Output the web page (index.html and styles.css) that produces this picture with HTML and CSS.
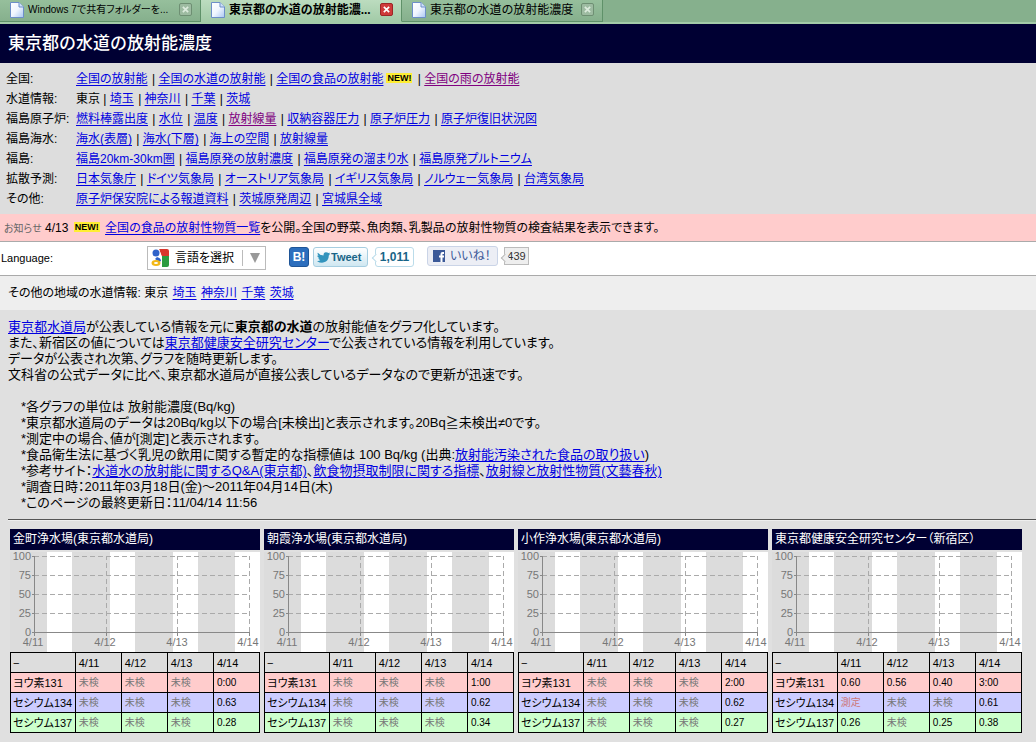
FILE: index.html
```html
<!DOCTYPE html>
<html lang="ja">
<head>
<meta charset="utf-8">
<title>東京都の水道の放射能濃度</title>
<link rel="stylesheet" href="styles.css">
</head>
<body>
<svg class="defs" aria-hidden="true">
  <defs>
    <linearGradient id="paper" x1="0" y1="0" x2="1" y2="1"><stop offset="0" stop-color="#fff"/><stop offset=".5" stop-color="#f0f6ff"/><stop offset="1" stop-color="#a9c6f2"/></linearGradient>
    <symbol id="page" viewBox="0 0 14 16"><path d="M.5.5h8.5l4.500 4.500v10.500H.5z" fill="url(#paper)" stroke="#6d8fc9"/><path d="M9 .5V5h4.500" fill="#cfe0fa" stroke="#6d8fc9"/></symbol>
    <symbol id="cross" viewBox="0 0 8 8"><path d="M1 1l6 6M7 1l-6 6" stroke="currentColor" stroke-width="2"/></symbol>
    <symbol id="grid" viewBox="0 0 250 100">
      <path d="M0 0h37v100H0zM62 0h38v100H62zM125 0h38v100h-38zM188 0h37v100h-37z" fill="#dcdcdc"/>
      <path d="M37 0h25v100H37zM100 0h25v100h-25zM163 0h25v100h-25zM225 0h25v100h-25z" fill="#fff"/>
      <path d="M24 4.500H240M24 23.500H240M24 42.500H240M24 61.500H240" stroke="#aaa" stroke-dasharray="5 3" fill="none"/>
      <path d="M96.500 80V4M167.500 80V4M239.500 80V4" stroke="#aaa" stroke-dasharray="5 3" fill="none"/>
      <path d="M24.500 4V84M22 4.500h2M22 23.500h2M22 42.500h2M22 61.500h2M22 80.500H240M96.500 80v4M167.500 80v4M239.500 80v4" stroke="#888" fill="none"/>
    </symbol>
  </defs>
</svg>

<div class="tabs">
  <div class="tab"><svg class="tab-icon"><use href="#page"/></svg><button class="tab-name tab-long">Windows 7で共有フォルダーを...</button><button class="close" aria-label="閉じる"><svg><use href="#cross"/></svg></button></div>
  <div class="tab tab-active"><svg class="tab-icon"><use href="#page"/></svg><button class="tab-name">東京都の水道の放射能濃...</button><button class="close" aria-label="閉じる"><svg><use href="#cross"/></svg></button></div>
  <div class="tab"><svg class="tab-icon"><use href="#page"/></svg><button class="tab-name">東京都の水道の放射能濃度</button><button class="close" aria-label="閉じる"><svg><use href="#cross"/></svg></button></div>
</div>

<h1 class="title">東京都の水道の放射能濃度</h1>

<nav class="nav">
  <span>全国:</span><div><a href="#">全国の放射能</a> | <a href="#">全国の水道の放射能</a> | <a href="#">全国の食品の放射能</a><b class="new">NEW!</b> | <a href="#" class="seen">全国の雨の放射能</a></div>
  <span>水道情報:</span><div>東京 | <a href="#">埼玉</a> | <a href="#">神奈川</a> | <a href="#">千葉</a> | <a href="#">茨城</a></div>
  <span>福島原子炉:</span><div><a href="#">燃料棒露出度</a> | <a href="#">水位</a> | <a href="#">温度</a> | <a href="#" class="seen">放射線量</a> | <a href="#">収納容器圧力</a> | <a href="#">原子炉圧力</a> | <a href="#">原子炉復旧状況図</a></div>
  <span>福島海水:</span><div><a href="#">海水(表層)</a> | <a href="#">海水(下層)</a> | <a href="#">海上の空間</a> | <a href="#">放射線量</a></div>
  <span>福島:</span><div><a href="#">福島20km-30km圏</a> | <a href="#">福島原発の放射濃度</a> | <a href="#">福島原発の溜まり水</a> | <a href="#">福島原発プルトニウム</a></div>
  <span>拡散予測:</span><div><a href="#">日本気象庁</a> | <a href="#">ドイツ気象局</a> | <a href="#">オーストリア気象局</a> | <a href="#">イギリス気象局</a> | <a href="#">ノルウェー気象局</a> | <a href="#">台湾気象局</a></div>
  <span>その他:</span><div><a href="#">原子炉保安院による報道資料</a> | <a href="#">茨城原発周辺</a> | <a href="#">宮城県全域</a></div>
</nav>

<p class="notice"><small>お知らせ</small> 4/13 <b class="new">NEW!</b> <a href="#">全国の食品の放射性物質一覧</a>を公開。全国の野菜、魚肉類、乳製品の放射性物質の検査結果を表示できます。</p>

<div class="tools">
  <label class="lang-label" for="lang">Language:</label>
  <div class="lang">
    <svg class="google" viewBox="0 0 18 18"><path d="M8 0h8q2 0 2 2v6h-7z" fill="#d8352c"/><path d="M11 7h7v9q0 2-2 2h-5z" fill="#2b9b3f"/><path d="M0 2q0-2 2-2h6l3 8-3 10H2q-2 0-2-2z" fill="#fff"/><circle cx="5" cy="4" r="3.500" fill="#2f62c9"/><path d="M6 8q4 1 4 4l-2 1-4-3z" fill="#2f62c9"/><ellipse cx="5" cy="14" rx="4.500" ry="3" fill="#f3b816"/><ellipse cx="5" cy="14" rx="2" ry="1" fill="#fff"/></svg>
    <select id="lang"><option>言語を選択</option></select>
    <svg class="arrow" viewBox="0 0 10 10"><path d="M0 0h10L5 10z" fill="#999"/></svg>
  </div>
  <button class="hatena">B!</button>
  <button class="tweet"><svg viewBox="0 0 16 13"><path d="M0 11q3 0 4-1Q2 9 1.500 7.500h1.500Q0 6 .3 4L2 4.500Q0 2 1 .5 4 4 8 4 8 0 11 0q2 0 3 1l2-.5-1 2 1 .2L14.500 4Q14.500 9 11 11.500 6 14.500 0 11z" fill="#3294bd"/></svg>Tweet</button>
  <span class="count tweet-count">1,011</span>
  <button class="like"><svg viewBox="0 0 12 12"><path d="M0 0h12v12H0z" fill="#3b5998"/><path d="M11 3H9.500Q8.500 3 8.500 4v8M6 6.500h5" stroke="#fff" stroke-width="2" fill="none"/></svg>いいね！</button>
  <span class="count like-count">439</span>
</div>

<div class="areas">その他の地域の水道情報: 東京 <a href="#">埼玉</a> <a href="#">神奈川</a> <a href="#">千葉</a> <a href="#">茨城</a></div>

<main class="main">
  <p><a href="#">東京都水道局</a>が公表している情報を元に<b>東京都の水道</b>の放射能値をグラフ化しています。<br>
  また、新宿区の値については<a href="#">東京都健康安全研究センター</a>で公表されている情報を利用しています。<br>
  データが公表され次第、グラフを随時更新します。<br>
  文科省の公式データに比べ、東京都水道局が直接公表しているデータなので更新が迅速です。</p>
  <ul class="notes">
    <li>*各グラフの単位は 放射能濃度(Bq/kg)</li>
    <li>*東京都水道局のデータは20Bq/kg以下の場合[未検出]と表示されます。20Bq≧未検出≠0です。</li>
    <li>*測定中の場合、値が[測定]と表示されます。</li>
    <li>*食品衛生法に基づく乳児の飲用に関する暫定的な指標値は 100 Bq/kg (出典:<a href="#">放射能汚染された食品の取り扱い</a>)</li>
    <li>*参考サイト：<a href="#">水道水の放射能に関するQ&amp;A(東京都)</a>、<a href="#">飲食物摂取制限に関する指標</a>、<a href="#">放射線と放射性物質(文藝春秋)</a></li>
    <li>*調査日時：2011年03月18日(金)～2011年04月14日(木)</li>
    <li>*このページの最終更新日：11/04/14 11:56</li>
  </ul>
  <hr>
  <div class="cards">
    <section class="card">
      <h2>金町浄水場(東京都水道局)</h2>
      <svg class="chart" viewBox="0 0 250 100"><use href="#grid"/><g class="y"><text x="21" y="8">100</text><text x="21" y="27">75</text><text x="21" y="46">50</text><text x="21" y="65">25</text><text x="21" y="84">0</text></g><g class="x"><text x="23" y="94">4/11</text><text x="95" y="94">4/12</text><text x="167" y="94">4/13</text><text x="238" y="94">4/14</text></g></svg>
      <table>
        <tr><th>−</th><th>4/11</th><th>4/12</th><th>4/13</th><th>4/14</th></tr>
        <tr class="iodine"><th>ヨウ素131</th><td class="none">未検</td><td class="none">未検</td><td class="none">未検</td><td>0:00</td></tr>
        <tr class="cs134"><th>セシウム134</th><td class="none">未検</td><td class="none">未検</td><td class="none">未検</td><td>0.63</td></tr>
        <tr class="cs137"><th>セシウム137</th><td class="none">未検</td><td class="none">未検</td><td class="none">未検</td><td>0.28</td></tr>
      </table>
    </section>
    <section class="card">
      <h2>朝霞浄水場(東京都水道局)</h2>
      <svg class="chart" viewBox="0 0 250 100"><use href="#grid"/><g class="y"><text x="21" y="8">100</text><text x="21" y="27">75</text><text x="21" y="46">50</text><text x="21" y="65">25</text><text x="21" y="84">0</text></g><g class="x"><text x="23" y="94">4/11</text><text x="95" y="94">4/12</text><text x="167" y="94">4/13</text><text x="238" y="94">4/14</text></g></svg>
      <table>
        <tr><th>−</th><th>4/11</th><th>4/12</th><th>4/13</th><th>4/14</th></tr>
        <tr class="iodine"><th>ヨウ素131</th><td class="none">未検</td><td class="none">未検</td><td class="none">未検</td><td>1:00</td></tr>
        <tr class="cs134"><th>セシウム134</th><td class="none">未検</td><td class="none">未検</td><td class="none">未検</td><td>0.62</td></tr>
        <tr class="cs137"><th>セシウム137</th><td class="none">未検</td><td class="none">未検</td><td class="none">未検</td><td>0.34</td></tr>
      </table>
    </section>
    <section class="card">
      <h2>小作浄水場(東京都水道局)</h2>
      <svg class="chart" viewBox="0 0 250 100"><use href="#grid"/><g class="y"><text x="21" y="8">100</text><text x="21" y="27">75</text><text x="21" y="46">50</text><text x="21" y="65">25</text><text x="21" y="84">0</text></g><g class="x"><text x="23" y="94">4/11</text><text x="95" y="94">4/12</text><text x="167" y="94">4/13</text><text x="238" y="94">4/14</text></g></svg>
      <table>
        <tr><th>−</th><th>4/11</th><th>4/12</th><th>4/13</th><th>4/14</th></tr>
        <tr class="iodine"><th>ヨウ素131</th><td class="none">未検</td><td class="none">未検</td><td class="none">未検</td><td>2:00</td></tr>
        <tr class="cs134"><th>セシウム134</th><td class="none">未検</td><td class="none">未検</td><td class="none">未検</td><td>0.62</td></tr>
        <tr class="cs137"><th>セシウム137</th><td class="none">未検</td><td class="none">未検</td><td class="none">未検</td><td>0.27</td></tr>
      </table>
    </section>
    <section class="card">
      <h2>東京都健康安全研究センター（新宿区）</h2>
      <svg class="chart" viewBox="0 0 250 100"><use href="#grid"/><g class="y"><text x="21" y="8">100</text><text x="21" y="27">75</text><text x="21" y="46">50</text><text x="21" y="65">25</text><text x="21" y="84">0</text></g><g class="x"><text x="23" y="94">4/11</text><text x="95" y="94">4/12</text><text x="167" y="94">4/13</text><text x="238" y="94">4/14</text></g></svg>
      <table>
        <tr><th>−</th><th>4/11</th><th>4/12</th><th>4/13</th><th>4/14</th></tr>
        <tr class="iodine"><th>ヨウ素131</th><td>0.60</td><td>0.56</td><td>0.40</td><td>3:00</td></tr>
        <tr class="cs134"><th>セシウム134</th><td class="pending">測定</td><td class="none">未検</td><td class="none">未検</td><td>0.61</td></tr>
        <tr class="cs137"><th>セシウム137</th><td>0.26</td><td class="none">未検</td><td>0.25</td><td>0.38</td></tr>
      </table>
    </section>
  </div>
</main>
</body>
</html>
```
FILE: styles.css
```css
* { box-sizing: border-box; }
body {
  margin: 0;
  background: #e0e0e0;
  color: #000;
  font: 12px/20px "Liberation Sans", "Noto Sans CJK JP", sans-serif;
  font-feature-settings: "palt";
}
button, select { font: inherit; font-feature-settings: inherit; color: inherit; margin: 0; padding: 0; border: 0; background: none; }
a { color: #0000e0; text-underline-offset: 2px; }
a.seen { color: #800080; }
.defs { display: block; width: 0; height: 0; }

.tabs { display: flex; height: 24px; background: #86b08d; border-bottom: 2px solid #a3cba8; }
.tab { display: flex; align-items: center; gap: 4px; width: 201px; padding: 0 8px 2px 10px; border-right: 1px solid #5f9169; border-bottom: 1px solid #5f9169; background: linear-gradient(#96bf9c, #86b08d); }
.tab-active { background: linear-gradient(#bcdcbf, #a3cba8); border-bottom-color: #a3cba8; font-weight: bold; }
.tab-icon { width: 14px; height: 16px; flex: none; }
.tab-name { flex: 1; min-width: 0; text-align: left; white-space: nowrap; }
.tab-long { font-size: 10px; }
.close { display: flex; flex: none; align-items: center; justify-content: center; width: 13px; height: 13px; border: 1px solid #6e8f73; border-radius: 2px; background: #9dbba1; color: #dcebdd; }
.close svg { width: 7px; height: 7px; }
.tab-active .close { background: #cf3a3a; border-color: #9c2626; color: #fff; }

.title { margin: 0; padding: 0 8px; background: #000033; color: #fff; font-size: 17px; line-height: 39px; font-weight: 500; font-feature-settings: normal; }

.nav { display: grid; grid-template-columns: 70px 1fr; padding: 6px 6px 5px; background: #ddd; }
.nav a { margin-right: 1px; }
.new { margin: 0 2px; padding: 0 1px; background: #fe3; font-size: 9px; line-height: 9px; vertical-align: 2px; }

.notice { margin: 0; padding: 4px 4px 2px; background: #fcc; border-bottom: 1px solid #aaa; }
.notice small { color: #666; font-size: 10px; }

.tools { display: flex; align-items: flex-start; padding: 4px 1px; background: #fff; border-bottom: 1px solid #aaa; min-height: 34px; }
.lang-label { width: 146px; font-size: 11px; line-height: 24px; }
.lang { display: flex; align-items: center; width: 119px; height: 24px; padding: 0 5px 0 3px; border: 1px solid #bbb; margin-right: 23px; }
.google { width: 18px; height: 18px; margin-right: 6px; }
.lang select { flex: 1; appearance: none; border-right: 1px solid #bbb; line-height: 16px; min-width: 0; }
.arrow { width: 10px; height: 10px; margin-left: 7px; }
.hatena { width: 20px; height: 20px; margin: 1px 4px 0 0; background: #2c6ebd; border: 1px solid #1f5597; border-radius: 3px; color: #fff; font-weight: bold; line-height: 18px; }
.tweet { display: flex; align-items: center; gap: 1px; width: 55px; height: 20px; margin: 1px 7px 0 0; padding-left: 3px; border: 1px solid #a6cee1; border-radius: 3px; background: linear-gradient(#fff, #cfe7f1); color: #186487; font-weight: bold; font-size: 11px; }
.tweet svg { width: 13px; height: 11px; }
.count { position: relative; height: 20px; text-align: center; }
.count::before { content: ""; position: absolute; left: -3px; top: 7px; width: 5px; height: 5px; transform: rotate(45deg); background: inherit; border: solid; border-color: inherit; border-width: 0 0 1px 1px; }
.tweet-count { width: 39px; margin: 1px 13px 0 0; border: 1px solid #bbdcea; border-radius: 3px; background: #fff; color: #186487; font-weight: bold; line-height: 18px; }
.like { display: flex; align-items: center; gap: 5px; width: 71px; height: 20px; margin-right: 6px; padding-left: 5px; border: 1px solid #cad4e7; border-radius: 3px; background: #eceef5; color: #3b5998; white-space: nowrap; }
.like svg { width: 12px; height: 12px; }
.like-count { width: 25px; height: 18px; margin-top: 1px; border: 1px solid #bbb; background: #eee; color: #333; font-size: 11px; line-height: 16px; }

.areas { padding: 7px 8px; background: #eee; }
.areas a { margin-left: 1px; }

.main { padding: 9px 0 0 8px; font-size: 13px; line-height: 16px; }
.main p { margin: 0 0 16px; }
.notes { margin: 0; padding: 0 0 0 13px; list-style: none; }
hr { margin: 8px 0; border: 0; border-top: 1px solid #555; border-bottom: 1px solid #eee; }

.cards { display: grid; grid-template-columns: repeat(4, 1fr); gap: 4px; padding: 0 14px 9px 2px; }
.card h2 { margin: 0 0 2px; padding: 0 3px; background: #000033; color: #fff; font-size: 12px; font-weight: normal; line-height: 21px; white-space: nowrap; }
.chart { display: block; width: 100%; overflow: visible; }
.chart text { font: 11px "Liberation Sans", sans-serif; fill: #777; }
.y { text-anchor: end; }
.x { text-anchor: middle; }
table { width: 100%; table-layout: fixed; border-collapse: collapse; font-size: 10px; line-height: 16px; }
th, td { height: 20px; padding: 0 3px; border: 1px solid #000; text-align: left; font-weight: normal; }
th { font-size: 11px; white-space: nowrap; }
th:first-child { width: 26%; padding: 0 2px; }
tr { background: #ddd; }
.iodine { background: #fcc; }
.cs134 { background: #ccf; }
.cs137 { background: #cfc; }
.none { color: #777; }
.pending { color: #c77; }
```
